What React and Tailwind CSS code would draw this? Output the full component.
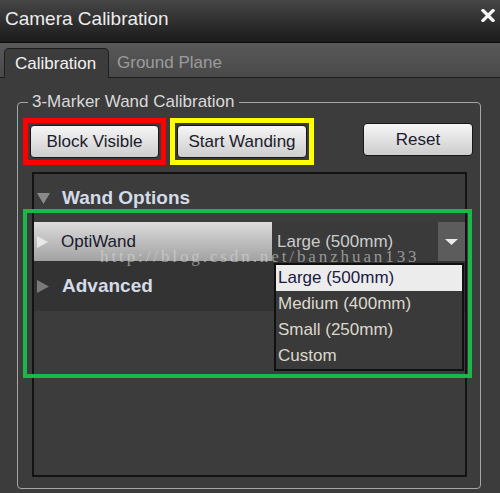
export default function App() {
  const btn =
    "w-full h-full rounded-[4px] border border-[#181818] bg-gradient-to-b from-[#f6f6f6] to-[#cdcdcd] text-[17px] text-[#1c1c2c] flex items-center justify-center";
  return (
    <div className="relative w-[500px] h-[493px] flex flex-col overflow-hidden bg-[#3c3c3c] font-['Liberation_Sans',Arial,sans-serif]">
      {/* Title bar */}
      <div className="h-[43px] shrink-0 flex items-start justify-between pl-[5px] pr-[5px] bg-gradient-to-b from-[#464646] to-[#1b1b1b] border-b border-[#0c0c0c]">
        <span className="mt-[9px] text-[19px] leading-none text-[#ececec]">Camera Calibration</span>
        <svg width="14" height="13" viewBox="0 0 14 13" className="mt-[9px]">
          <path d="M2 1.5 L12 11.5 M12 1.5 L2 11.5" stroke="#f4f4f4" strokeWidth="3.2" strokeLinecap="square" />
        </svg>
      </div>

      {/* Tabs */}
      <div className="h-[35px] shrink-0 flex items-end pl-[4px] bg-gradient-to-b from-[#585858] to-[#494949] border-b border-[#1c1c1c]">
        <div className="h-[30px] w-[105px] -mb-px pl-[10px] flex items-center rounded-t-[5px] border border-b-0 border-[#1e1e1e] bg-[#3c3c3c] text-[17px] text-[#f2f2f2]">
          Calibration
        </div>
        <div className="h-[29px] ml-[8px] flex items-center text-[17px] text-[#9c9c9c]">Ground Plane</div>
      </div>

      {/* Body */}
      <div className="flex-1 min-h-0 pt-[14px] pl-[17px] pr-[19px] pb-[4px]">
        <fieldset className="h-full min-w-0 flex flex-col border border-[#a6a6a6] rounded-[4px] pl-[5px] pr-[7px] pb-[11px]">
          <legend className="ml-[5px] px-[4px] text-[17px] leading-[20px] text-[#dadada]">3-Marker Wand Calibration</legend>

          <div className="mt-[6px] flex items-start">
            <div className="w-[143px] h-[47px] border-[5px] border-[#ff0000] p-[2px]">
              <div className={btn}>Block Visible</div>
            </div>
            <div className="ml-[4px] w-[144px] h-[47px] border-[5px] border-[#ffff00] p-[2px]">
              <div className={btn}>Start Wanding</div>
            </div>
            <div className="ml-auto mt-[5px] w-[110px] h-[33px]">
              <div className={btn}>Reset</div>
            </div>
          </div>

          <div className="mt-[7px] ml-[9px] mr-[6px] flex-1 border-2 border-[#131313] bg-[#3c3c3c] flex flex-col">
            <div className="h-[48px] flex items-center pl-[3px]">
              <svg width="13" height="11" viewBox="0 0 13 11">
                <path d="M0 0 H13 L6.5 11 Z" fill="#8a8a8a" />
              </svg>
              <span className="ml-[12px] text-[19px] font-bold text-[#d4dbe8]">Wand Options</span>
            </div>
            <div className="h-[39px] flex">
              <div className="w-[238px] flex items-center pl-[3px] bg-gradient-to-b from-[#dcdcdc] to-[#a2a2a2]">
                <svg width="11" height="12" viewBox="0 0 11 12">
                  <path d="M0 0 L11 6 L0 12 Z" fill="#e8e8e8" />
                </svg>
                <span className="ml-[13px] text-[17px] text-[#1a1a2e]">OptiWand</span>
              </div>
              <div className="flex-1 flex items-center pl-[5px] bg-[#3a3a3a] text-[17px] text-[#cccccc]">Large (500mm)</div>
              <div className="w-[27px] flex items-center justify-center bg-[#5c5c5c]">
                <svg width="13" height="6" viewBox="0 0 13 6">
                  <path d="M0 0 H13 L6.5 6 Z" fill="#ececec" />
                </svg>
              </div>
            </div>
            <div className="h-[50px] flex items-center pl-[3px] bg-[#333333]">
              <svg width="12" height="13" viewBox="0 0 12 13">
                <path d="M0 0 L12 6.5 L0 13 Z" fill="#7a7a7a" />
              </svg>
              <span className="ml-[13px] text-[19px] font-bold text-[#d4dbe8]">Advanced</span>
            </div>
          </div>
        </fieldset>
      </div>

      {/* Open dropdown list */}
      <div className="absolute left-[274px] top-[263px] w-[190px] h-[108px] border-2 border-[#101010] bg-[#3a3a3a] flex flex-col text-[17px]">
        <div className="h-[26px] flex items-center pl-[2px] bg-[#ececec] text-[#1a1a44]">Large (500mm)</div>
        <div className="h-[26px] flex items-center pl-[2px] text-[#dcd8cc]">Medium (400mm)</div>
        <div className="h-[26px] flex items-center pl-[2px] text-[#dcd8cc]">Small (250mm)</div>
        <div className="h-[26px] flex items-center pl-[2px] text-[#dcd8cc]">Custom</div>
      </div>

      {/* Green annotation */}
      <div className="absolute left-[23px] top-[209px] w-[449px] h-[169px] border-4 border-[#19b84b] pointer-events-none" />

      {/* Watermark */}
      <div className="absolute left-[100px] top-[245px] text-[17px] leading-[24px] tracking-[2.9px] whitespace-nowrap text-[rgba(215,215,215,0.6)] font-['Liberation_Serif',serif] pointer-events-none">
        http://blog.csdn.net/banzhuan133
      </div>
    </div>
  );
}
